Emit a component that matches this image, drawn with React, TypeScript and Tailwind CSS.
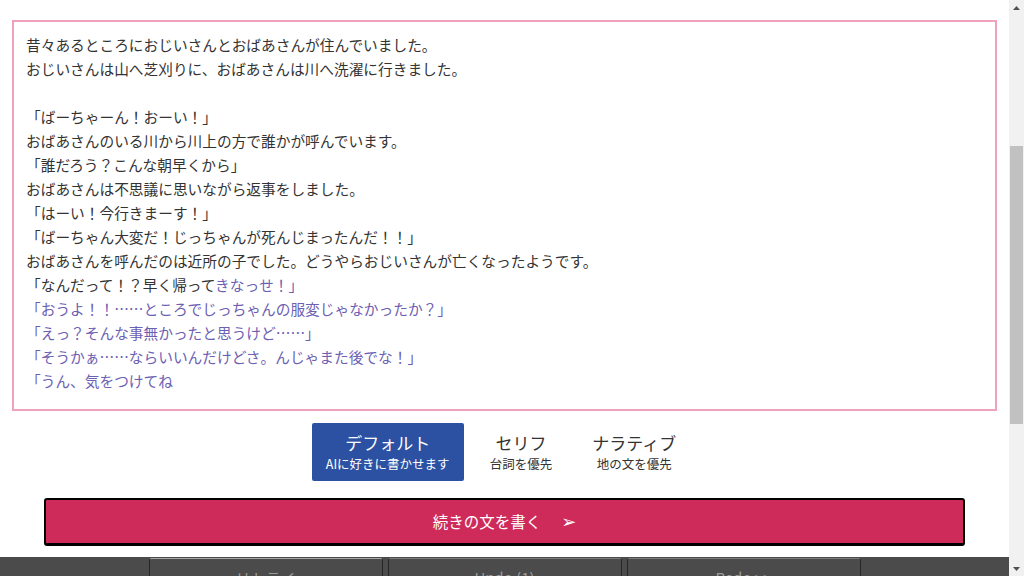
const story: { text: string; ai?: string }[] = [
  { text: "昔々あるところにおじいさんとおばあさんが住んでいました。" },
  { text: "おじいさんは山へ芝刈りに、おばあさんは川へ洗濯に行きました。" },
  { text: "" },
  { text: "「ばーちゃーん！おーい！」" },
  { text: "おばあさんのいる川から川上の方で誰かが呼んでいます。" },
  { text: "「誰だろう？こんな朝早くから」" },
  { text: "おばあさんは不思議に思いながら返事をしました。" },
  { text: "「はーい！今行きまーす！」" },
  { text: "「ばーちゃん大変だ！じっちゃんが死んじまったんだ！！」" },
  { text: "おばあさんを呼んだのは近所の子でした。どうやらおじいさんが亡くなったようです。" },
  { text: "「なんだって！？早く帰って", ai: "きなっせ！」" },
  { text: "", ai: "「おうよ！！……ところでじっちゃんの服変じゃなかったか？」" },
  { text: "", ai: "「えっ？そんな事無かったと思うけど……」" },
  { text: "", ai: "「そうかぁ……ならいいんだけどさ。んじゃまた後でな！」" },
  { text: "", ai: "「うん、気をつけてね" },
];

const modes = [
  { title: "デフォルト", sub: "AIに好きに書かせます", active: true },
  { title: "セリフ", sub: "台詞を優先" },
  { title: "ナラティブ", sub: "地の文を優先" },
];

const tools = [
  { label: "リトライ", top: "border-t-[#a5a5a5]" },
  { label: "Undo (1)", top: "border-t-[#7a7a7a]" },
  { label: "Redo >>", top: "border-t-[#7a7a7a]" },
];

export default function App() {
  return (
    <div className="flex h-[576px] overflow-hidden bg-white text-[#333] font-['Noto_Sans_CJK_JP','Noto_Sans',sans-serif]">
      <main className="flex-1 pt-5">
        {/* 本文 */}
        <div className="mx-3 h-[391px] border-2 border-[#f0a2bd] px-3 pt-[11px] text-[14.7px] leading-6">
          {story.map((line, i) => (
            <div key={i} className="h-6 whitespace-nowrap">
              {line.text}
              {line.ai && <span className="text-[#6c60b3]">{line.ai}</span>}
            </div>
          ))}
        </div>

        {/* モード選択 */}
        <div className="mt-3 flex justify-center gap-3 pr-[7px]">
          {modes.map((m) => (
            <div
              key={m.title}
              className={`flex h-[58px] flex-col items-center justify-center rounded-[2px] px-[14px] ${
                m.active ? "w-[152px] bg-[#2c51a2] text-white" : "text-[#333]"
              }`}
            >
              <span className="text-[17px] leading-6">{m.title}</span>
              <span className="text-[12.5px] leading-[18px]">{m.sub}</span>
            </div>
          ))}
        </div>

        {/* 続きを書く */}
        <button className="mx-11 mt-[17px] flex h-12 w-[calc(100%-88px)] items-center justify-center rounded-[3px] border-2 border-b-[3px] border-black bg-[#ce2a5a] text-[15.5px] text-white">
          続きの文を書く
          <span className="ml-5 font-['DejaVu_Sans',sans-serif] text-[18px] leading-none">➢</span>
        </button>

        {/* 下部バー */}
        <div className="mt-[11px] h-[303px] bg-[#4b4b4b] pt-px">
          <div className="flex justify-center gap-[5px]">
            {tools.map((t) => (
              <button
                key={t.label}
                className={`h-10 w-[234px] rounded-t-[3px] border border-[#262626] ${t.top} text-[15px] text-[#9a9a9a]`}
              >
                {t.label}
              </button>
            ))}
          </div>
        </div>
      </main>

      {/* スクロールバー */}
      <div className="flex w-[15px] flex-col items-center bg-[#f1f1f1]">
        <div className="flex h-[15px] items-center justify-center">
          <svg width="7" height="4" viewBox="0 0 7 4"><path d="M0 4 L3.5 0 L7 4 Z" fill="#505050" /></svg>
        </div>
        <div className="h-[131px]" />
        <div className="h-[278px] w-[13px] bg-[#c1c1c1]" />
        <div className="flex-1" />
        <div className="flex h-[15px] items-center justify-center">
          <svg width="7" height="4" viewBox="0 0 7 4"><path d="M0 0 L3.5 4 L7 0 Z" fill="#505050" /></svg>
        </div>
      </div>
    </div>
  );
}
